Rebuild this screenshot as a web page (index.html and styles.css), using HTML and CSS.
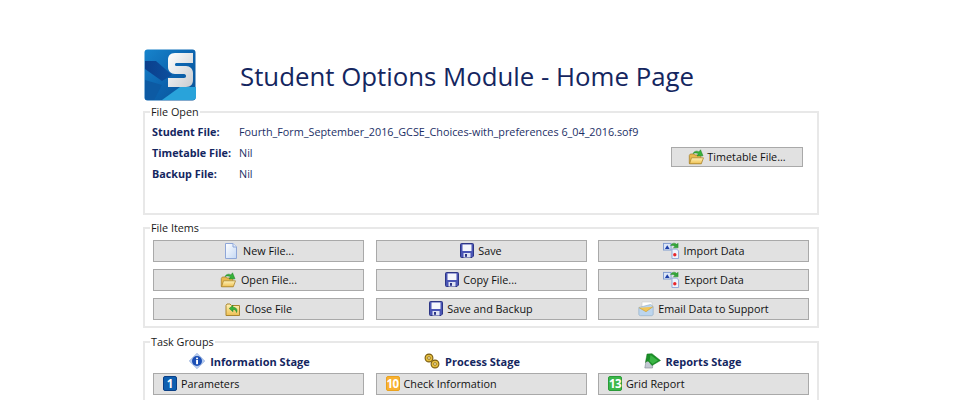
FILE: index.html
```html
<!DOCTYPE html>
<html lang="en">
<head>
<meta charset="utf-8">
<title>Student Options Module - Home Page</title>
<link rel="stylesheet" href="styles.css">
</head>
<body>
<svg class="defs" width="0" height="0" aria-hidden="true">
  <defs>
    <linearGradient id="folder" x1="0" y1="0" x2="0" y2="1"><stop offset="0" stop-color="#fff3b8"/><stop offset="1" stop-color="#eebf52"/></linearGradient>
    <linearGradient id="page" x1="0" y1="0" x2="1" y2="1"><stop offset="0" stop-color="#fff"/><stop offset="1" stop-color="#c4d8f4"/></linearGradient>
    <symbol id="i-new" viewBox="0 0 16 16"><path d="M2.500.5h7.500l3.500 3.500v11.500h-11z" fill="url(#page)" stroke="#8ea6d8"/><path d="M10 .5v3.500h3.500" fill="#e4eefb" stroke="#8ea6d8"/></symbol>
    <symbol id="i-open" viewBox="0 0 16 16"><path d="M.8 14.500V6.500l1-1.500h3.500l1 1h6v8.500z" fill="#e9b94d" stroke="#a9852f" stroke-width=".8"/><path d="M1 14.800l2-6h12l-2.200 6z" fill="url(#folder)" stroke="#a9852f" stroke-width=".8"/><path d="M4.500 4.500C6 2 8.500 1.500 10.500 3L12 .8l2.500 6-6 .2 1.500-2.200C8.500 3.800 6.500 3.500 4.500 4.500z" fill="#35b33a" stroke="#1c7e23" stroke-width=".5"/></symbol>
    <symbol id="i-close" viewBox="0 0 16 16"><path d="M1 14.500V4.500l1-1.500h3l1.500 1.500H14.500v10z" fill="url(#folder)" stroke="#a9852f"/><path d="M11.500 11.500c1.500-3-.5-5.500-3.500-5V4.300L4.200 7.500 8 10.700V8.500c1.800-.3 3.200.8 3.500 3z" fill="#35b33a" stroke="#1c7e23" stroke-width=".5"/></symbol>
    <symbol id="i-save" viewBox="0 0 14 15"><path d="M1.500.5h11a1 1 0 0 1 1 1v11.500l-1.500 1.500h-10.500a1 1 0 0 1-1-1V1.500a1 1 0 0 1 1-1z" fill="#4a55b5" stroke="#2c3585"/><rect x="2.500" y="1.500" width="9" height="6.500" fill="#f4f6fc"/><rect x="3.500" y="10" width="7" height="4.500" fill="#dfe3f3"/><rect x="5" y="11" width="2" height="2.800" fill="#2c3585"/></symbol>
    <symbol id="i-data" viewBox="0 0 18 18"><rect x=".5" y="1.500" width="8" height="7" fill="#dce6f7" stroke="#7f9bd0"/><path d="M2 7.500l2.500-4 2.500 4z" fill="#1d3fa8"/><path d="M9.500 7.500h5l2 2v8h-7z" fill="#eef3fc" stroke="#8ea6d8"/><circle cx="12.500" cy="13.500" r="1.800" fill="#e8262b"/><path d="M8 3.800C9.500 .8 12.500 .5 14.500 2.500L16 1.200v5h-5l1.500-1.500C11.500 3.500 10 3.500 8 3.800z" fill="#35a63a" stroke="#1c7e23" stroke-width=".4"/></symbol>
    <symbol id="i-mail" viewBox="0 0 16 16"><path d="M4 1h10v6H4z" fill="#fff" stroke="#c9c9c9" stroke-width=".6"/><path d="M.8 6.500L12.500 3.500l2.700 2v7.500c0 1-.8 1.700-1.800 1.700H2.500c-1 0-1.700-.7-1.700-1.700z" fill="#bcd5ee" stroke="#8fa9c2" stroke-width=".6"/><path d="M1 6.700l7 4 7-5" fill="#f2c558" stroke="#c99b2e" stroke-width=".6"/></symbol>
    <symbol id="i-info" viewBox="0 0 16 16"><path d="M8 .2L15.800 8 8 15.800.2 8z" fill="#b7cdf0" stroke="#8fa9d8" stroke-width=".6"/><circle cx="8" cy="8" r="5" fill="#1c4fb5"/><rect x="7.100" y="7" width="1.900" height="4.200" fill="#fff"/><rect x="7.100" y="4.600" width="1.900" height="1.600" fill="#fff"/></symbol>
    <symbol id="i-gears" viewBox="0 0 16 16"><circle cx="5" cy="5" r="3.900" fill="#e5bd3c" stroke="#7a5c10" stroke-width="1.100"/><circle cx="5" cy="5" r="1.400" fill="#fff4c4" stroke="#7a5c10" stroke-width=".7"/><circle cx="11" cy="11" r="3.900" fill="#e5bd3c" stroke="#7a5c10" stroke-width="1.100"/><circle cx="11" cy="11" r="1.400" fill="#fff4c4" stroke="#7a5c10" stroke-width=".7"/></symbol>
    <symbol id="i-book" viewBox="0 0 17 15"><path d="M.8 14.500L2.500 5l6.500 3.500-.5 6z" fill="#c2c8d2" stroke="#7f8792" stroke-width=".6"/><path d="M3 .5l5-.3 8.500 6.800-8.500 5L5.500 9C4.500 7.500 3 7 1.500 9z" fill="#1a8f27" stroke="#14741d" stroke-width=".5"/><path d="M6.500 1.500l7.500 5.500-5.500 3.500-3-3z" fill="#3bb545"/></symbol>
  </defs>
</svg>
<main class="page">
  <header class="head">
    <svg class="logo" viewBox="0 0 52 52" role="img" aria-label="Logo">
      <defs><linearGradient id="lg" x1="0" y1="0" x2="1" y2="1"><stop offset="0" stop-color="#1784cc"/><stop offset=".55" stop-color="#0c62ad"/><stop offset="1" stop-color="#0a5296"/></linearGradient>
      <linearGradient id="ld" x1="0" y1="0" x2="1" y2="0"><stop offset="0" stop-color="#0b3f8c"/><stop offset="1" stop-color="#0c4f9e"/></linearGradient>
      <linearGradient id="ls" x1="0" y1="0" x2="1" y2="1"><stop offset="0" stop-color="#fff"/><stop offset="1" stop-color="#c9ccd0"/></linearGradient></defs>
      <rect x=".5" y=".5" width="51" height="51" rx="3" fill="url(#lg)"/>
      <path d="M1 12h11l16 14-10 6L1 20z" fill="url(#ld)"/>
      <path d="M1 31l17 5-8 15H4q-3 0-3-3z" fill="#0d5aa3"/>
      <path d="M18 51l18-13h16v10q0 3-3 3z" fill="#29a3da"/>
      <path d="M49 4H31C26 4 24 7 24 11v7c0 4 3 7 7 7h9c1.500 0 2 1 2 2s-.5 2-2 2H24v9h18c5 0 7-3 7-7v-7c0-4-3-7-7-7h-9c-1.500 0-2-.5-2-1.500s.5-1.500 2-1.500h16z" fill="url(#ls)"/>
    </svg>
    <h1 class="title">Student Options Module - Home Page</h1>
  </header>

  <fieldset class="group group-open">
    <legend>File Open</legend>
    <div class="open-body">
      <dl class="files">
        <dt>Student File:</dt><dd>Fourth_Form_September_2016_GCSE_Choices-with_preferences 6_04_2016.sof9</dd>
        <dt>Timetable File:</dt><dd>Nil</dd>
        <dt>Backup File:</dt><dd>Nil</dd>
      </dl>
      <button class="btn btn-tt"><svg class="ic ic17"><use href="#i-open"/></svg>Timetable File...</button>
    </div>
  </fieldset>

  <fieldset class="group group-items">
    <legend>File Items</legend>
    <div class="grid">
      <button class="btn"><svg class="ic ic16"><use href="#i-new"/></svg>New File...</button>
      <button class="btn"><svg class="ic ic14"><use href="#i-save"/></svg>Save</button>
      <button class="btn"><svg class="ic ic18"><use href="#i-data"/></svg>Import Data</button>
      <button class="btn"><svg class="ic ic17"><use href="#i-open"/></svg>Open File...</button>
      <button class="btn"><svg class="ic ic14"><use href="#i-save"/></svg>Copy File...</button>
      <button class="btn"><svg class="ic ic18"><use href="#i-data"/></svg>Export Data</button>
      <button class="btn"><svg class="ic ic16"><use href="#i-close"/></svg>Close File</button>
      <button class="btn"><svg class="ic ic14"><use href="#i-save"/></svg>Save and Backup</button>
      <button class="btn"><svg class="ic ic16"><use href="#i-mail"/></svg>Email Data to Support</button>
    </div>
  </fieldset>

  <fieldset class="group group-tasks">
    <legend>Task Groups</legend>
    <div class="grid grid-tasks">
      <h2 class="stage"><svg class="ic ic16"><use href="#i-info"/></svg>Information Stage</h2>
      <h2 class="stage"><svg class="ic ic16"><use href="#i-gears"/></svg>Process Stage</h2>
      <h2 class="stage stage-reports"><svg class="ic ic17"><use href="#i-book"/></svg>Reports Stage</h2>
      <button class="btn btn-task"><span class="num num-blue">1</span>Parameters</button>
      <button class="btn btn-task"><span class="num num-amber">10</span>Check Information</button>
      <button class="btn btn-task"><span class="num num-green">13</span>Grid Report</button>
    </div>
  </fieldset>
</main>
</body>
</html>
```
FILE: styles.css
```css
* { box-sizing: border-box; }
html, body { height: 100%; }
body {
  margin: 0;
  overflow: hidden;
  background: #fff;
  color: #1a1a1a;
  font-family: "Open Sans", "Noto Sans", sans-serif;
  font-size: 10.800px;
}
.defs { position: absolute; }
.page { width: 676px; height: 100%; overflow: hidden; margin-left: 143px; padding-top: 49px; }

.head { display: flex; align-items: center; height: 51px; margin-bottom: 5px; }
.logo { width: 52px; height: 52px; margin-left: 1px; flex: none; }
.title {
  margin: 2px 0 0 44px;
  font-weight: 400;
  font-size: 25.800px;
  line-height: 36px;
  color: #14265f;
  white-space: nowrap;
}

.group {
  margin: 0;
  min-width: 0;
  padding: 0 8px;
  border: 2px solid #e8e8e8;
}
.group legend {
  margin-left: -3px;
  padding: 0 1px;
  font-size: 10.800px;
  line-height: 14px;
  color: #1a1a1a;
}
.group-open { height: 110px; }
.group-items { height: 107px; margin-top: 6px; }
.group-tasks { height: 120px; margin-top: 7px; }

.open-body { position: relative; padding-top: 6px; }
.files {
  display: grid;
  grid-template-columns: 86px 1fr;
  grid-auto-rows: 21px;
  margin: 0;
  line-height: 14px;
}
.files dt { font-weight: 700; color: #14265f; margin-left: -1px; }
.files dd { margin: 0; color: #1c2f66; white-space: nowrap; }

.btn {
  display: flex;
  align-items: center;
  justify-content: center;
  gap: 4px;
  height: 22px;
  padding: 0 0 1px;
  border: 1px solid #a9a9a9;
  background: #e1e1e1;
  font: inherit;
  color: #111;
  white-space: nowrap;
}
.btn-tt {
  position: absolute;
  top: 28px;
  right: 6px;
  gap: 2px;
  width: 132px;
  height: 20px;
}
.btn-task { justify-content: flex-start; padding-left: 9px; }

.grid {
  display: grid;
  grid-template-columns: repeat(3, 211px);
  column-gap: 11.500px;
  row-gap: 7px;
  padding-top: 5px;
}
.grid-tasks { row-gap: 4px; padding-top: 4px; }

.stage {
  display: flex;
  align-items: center;
  justify-content: center;
  gap: 5px;
  height: 16px;
  margin: 0;
  padding-right: 18px;
  font-size: 11px;
  font-weight: 700;
  color: #14265f;
}
.stage-reports { padding-right: 22px; }
.ic { flex: none; display: block; }
.ic14 { width: 14px; height: 15px; }
.ic16 { width: 16px; height: 16px; }
.ic17 { width: 17px; height: 16px; }
.ic18 { width: 17px; height: 17px; }

.num {
  display: flex;
  align-items: center;
  justify-content: center;
  width: 14px;
  height: 15px;
  border-radius: 2px;
  color: #fff;
  font-size: 11.500px;
  font-weight: 700;
  line-height: 1;
}
.num-blue { background: #0f5fb0; border: 1px solid #0a3f86; }
.num-amber { background: #f8b132; border: 1px solid #eaa21e; letter-spacing: -.5px; }
.num-green { background: #3cb84a; border: 1px solid #2a9b38; letter-spacing: -.5px; }
```
